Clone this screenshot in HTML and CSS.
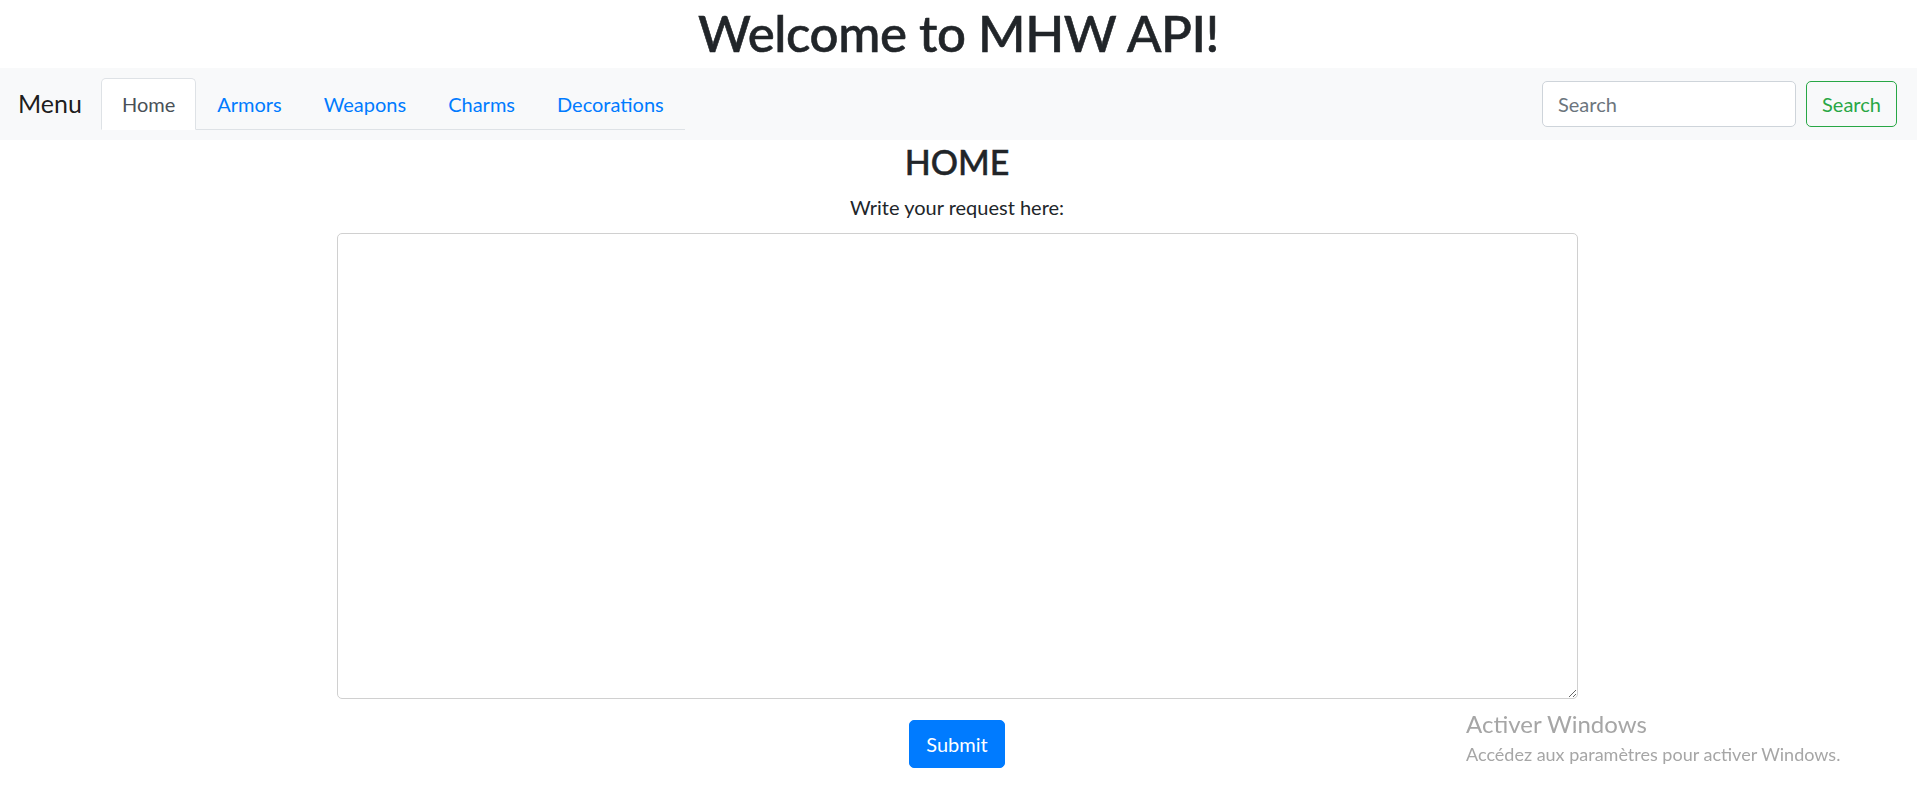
FILE: index.html
```html
<!DOCTYPE html>
<html lang="en">
<head>
<meta charset="utf-8">
<title>MHW API</title>
<link rel="stylesheet" href="styles.css">
</head>
<body>
<h1 class="site-title">Welcome to MHW API!</h1>
<nav class="navbar">
  <span class="brand">Menu</span>
  <ul class="tabs">
    <li class="tab"><a class="tab-link active" href="#">Home</a></li>
    <li class="tab"><a class="tab-link" href="#">Armors</a></li>
    <li class="tab"><a class="tab-link" href="#">Weapons</a></li>
    <li class="tab"><a class="tab-link" href="#">Charms</a></li>
    <li class="tab"><a class="tab-link" href="#">Decorations</a></li>
  </ul>
  <form class="search-form">
    <input class="search-input" type="search" placeholder="Search">
    <button class="search-btn" type="button">Search</button>
  </form>
</nav>
<main class="main">
  <h2 class="page-title">HOME</h2>
  <form class="request-form">
    <label class="request-label" for="req">Write your request here:</label>
    <textarea class="request-area" id="req"></textarea>
    <button class="submit-btn" type="button">Submit</button>
  </form>
</main>
<div class="watermark">
  <div class="wm-title">Activer Windows</div>
  <div class="wm-sub">Accédez aux paramètres pour activer Windows.</div>
</div>
</body>
</html>
```

FILE: styles.css
```css
* { box-sizing: border-box; }

body {
  margin: 0;
  font-family: Lato, "Open Sans", sans-serif;
  font-size: 20px;
  line-height: 1.5;
  color: #212529;
  background: #fff;
}

.site-title {
  margin: 0 0 6px;
  padding-top: 3px;
  font-size: 51px;
  font-weight: 500;
  line-height: 59px;
  letter-spacing: -0.4px;
  text-align: center;
  color: #212529;
  -webkit-text-stroke: 0.6px #212529;
}

.navbar {
  display: flex;
  align-items: center;
  height: 72px;
  padding: 10px 20px 10px 18px;
  background: #f8f9fa;
}

.brand {
  font-size: 25px;
  line-height: 1.5;
  color: rgba(0, 0, 0, 0.9);
  margin-right: 19px;
}

.tabs {
  display: flex;
  list-style: none;
  margin: 0;
  padding: 0;
  border-bottom: 1px solid #dee2e6;
  align-self: flex-end;
}

.tab { margin-bottom: -1px; }

.tab-link {
  display: block;
  padding: 10px 20px;
  font-size: 20px;
  line-height: 30px;
  color: #007bff;
  text-decoration: none;
  border: 1px solid transparent;
  border-top-left-radius: 5px;
  border-top-right-radius: 5px;
}

.tab-link.active {
  color: #495057;
  background: #fff;
  border-color: #dee2e6 #dee2e6 #fff;
}

.search-form {
  display: flex;
  align-items: center;
  margin-left: auto;
}

.search-input {
  width: 254px;
  height: 46px;
  padding: 7px 15px;
  font-family: inherit;
  font-size: 20px;
  color: #495057;
  background: #fff;
  border: 1px solid #ced4da;
  border-radius: 5px;
  outline: none;
}

.search-input::placeholder { color: #6c757d; }

.search-btn {
  width: 91px;
  height: 46px;
  margin-left: 10px;
  padding: 0;
  font-family: inherit;
  font-size: 20px;
  color: #28a745;
  background: transparent;
  border: 1px solid #28a745;
  border-radius: 5px;
}

.main {
  text-align: center;
  padding-right: 3px;
}

.page-title {
  margin: 0;
  padding-top: 1px;
  font-size: 34px;
  font-weight: 500;
  line-height: 42px;
  color: #212529;
  -webkit-text-stroke: 0.5px #212529;
}

.request-form {
  display: flex;
  flex-direction: column;
  align-items: center;
  padding-top: 9px;
}

.request-label {
  display: block;
  margin-bottom: 11px;
  font-size: 20px;
  line-height: 30px;
}

.request-area {
  display: block;
  width: 1241px;
  height: 466px;
  padding: 7px 15px;
  font-family: inherit;
  font-size: 20px;
  border: 1px solid #d0d0d0;
  border-radius: 5px;
  resize: both;
}

.submit-btn {
  width: 96px;
  height: 48px;
  margin-top: 21px;
  padding: 0;
  font-family: inherit;
  font-size: 20px;
  color: #fff;
  background: #007bff;
  border: 1px solid #007bff;
  border-radius: 5px;
}

.watermark {
  position: fixed;
  left: 1466px;
  top: 710px;
  color: #a6a6a6;
  pointer-events: none;
}

.wm-title {
  font-size: 24px;
  line-height: 1.2;
}

.wm-sub {
  margin-top: 5px;
  font-size: 18px;
  line-height: 1.2;
}
```
